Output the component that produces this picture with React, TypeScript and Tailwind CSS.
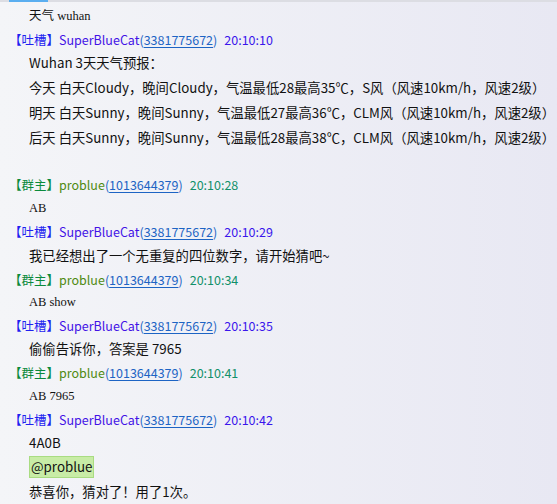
import React from 'react';

type Role = 'tucao' | 'owner';

const ui = { fontFamily: '"Noto Sans CJK SC", "Noto Sans", sans-serif' };
const plain = { fontFamily: '"Liberation Serif", "Noto Sans CJK SC", serif' };

function Header({ role, name, qq, time }: { role: Role; name: string; qq: string; time: string }) {
  const tag = role === 'tucao' ? 'text-[#1f1ff0]' : 'text-[#0b8a3c]';
  const nameColor = role === 'tucao' ? 'text-[#4312e6]' : 'text-[#4f8a12]';
  const timeColor = role === 'tucao' ? 'text-[#3a16ec]' : 'text-[#12906a]';
  return (
    <div className="h-[23px] flex items-center pl-[9px] pt-[1px] text-[12.5px] whitespace-nowrap" style={ui}>
      <span className={tag}>【{role === 'tucao' ? '吐槽' : '群主'}】</span>
      <span className={nameColor}>{name}</span>
      <span className="text-[#1d64c4]">(</span>
      <span className="text-[#1d64c4] underline underline-offset-2">{qq}</span>
      <span className="text-[#1d64c4]">)</span>
      <span className={`${timeColor} ml-[7px]`}>{time}</span>
    </div>
  );
}

function Line({ children, h = 'h-[24px]' }: { children: React.ReactNode; h?: string }) {
  return (
    <div className={`${h} flex items-center pl-[29px] text-[13.33px] text-[#111] whitespace-nowrap`} style={ui}>
      {children}
    </div>
  );
}

function Plain({ children, h = 'h-[24px]' }: { children: React.ReactNode; h?: string }) {
  return (
    <div className={`${h} flex items-center pl-[29px] text-[12.5px] text-[#111] whitespace-pre`} style={plain}>
      {children}
    </div>
  );
}

export default function App() {
  const blue = { name: 'SuperBlueCat', qq: '3381775672' };
  const owner = { name: 'problue', qq: '1013644379' };
  return (
    <div className="w-[557px] h-[504px] overflow-hidden bg-gradient-to-r from-[#f4f5f8] to-[#e8e8f3]">
      <div className="h-[2px] bg-[#dcdde3]">
        <div className="ml-[9px] w-[39px] h-full bg-[#5aaef0]" />
      </div>
      <div className="pt-[2px]">
        <Plain>天气 wuhan</Plain>
        <Header role="tucao" {...blue} time="20:10:10" />
        <Line>Wuhan 3天天气预报：</Line>
        <Line h="h-[25px]">今天 白天Cloudy，晚间Cloudy，气温最低28最高35℃，S风（风速10km/h，风速2级）</Line>
        <Line h="h-[25px]">明天 白天Sunny，晚间Sunny，气温最低27最高36℃，CLM风（风速10km/h，风速2级）</Line>
        <Line h="h-[25px]">后天 白天Sunny，晚间Sunny，气温最低28最高38℃，CLM风（风速10km/h，风速2级）</Line>
        <div className="h-[23px]" />
        <Header role="owner" {...owner} time="20:10:28" />
        <Plain>AB</Plain>
        <Header role="tucao" {...blue} time="20:10:29" />
        <Line h="h-[25px]">我已经想出了一个无重复的四位数字，请开始猜吧~</Line>
        <Header role="owner" {...owner} time="20:10:34" />
        <Plain h="h-[23px]">AB show</Plain>
        <Header role="tucao" {...blue} time="20:10:35" />
        <Line>偷偷告诉你，答案是 7965</Line>
        <Header role="owner" {...owner} time="20:10:41" />
        <Plain>AB 7965</Plain>
        <Header role="tucao" {...blue} time="20:10:42" />
        <Line>4A0B</Line>
        <Line>
          <span className="h-[22px] flex items-center px-[1px] bg-[#c8eca6] border border-[#a9dc82]">@problue</span>
        </Line>
        <Line h="h-[25px]">恭喜你，猜对了！用了1次。</Line>
      </div>
    </div>
  );
}
